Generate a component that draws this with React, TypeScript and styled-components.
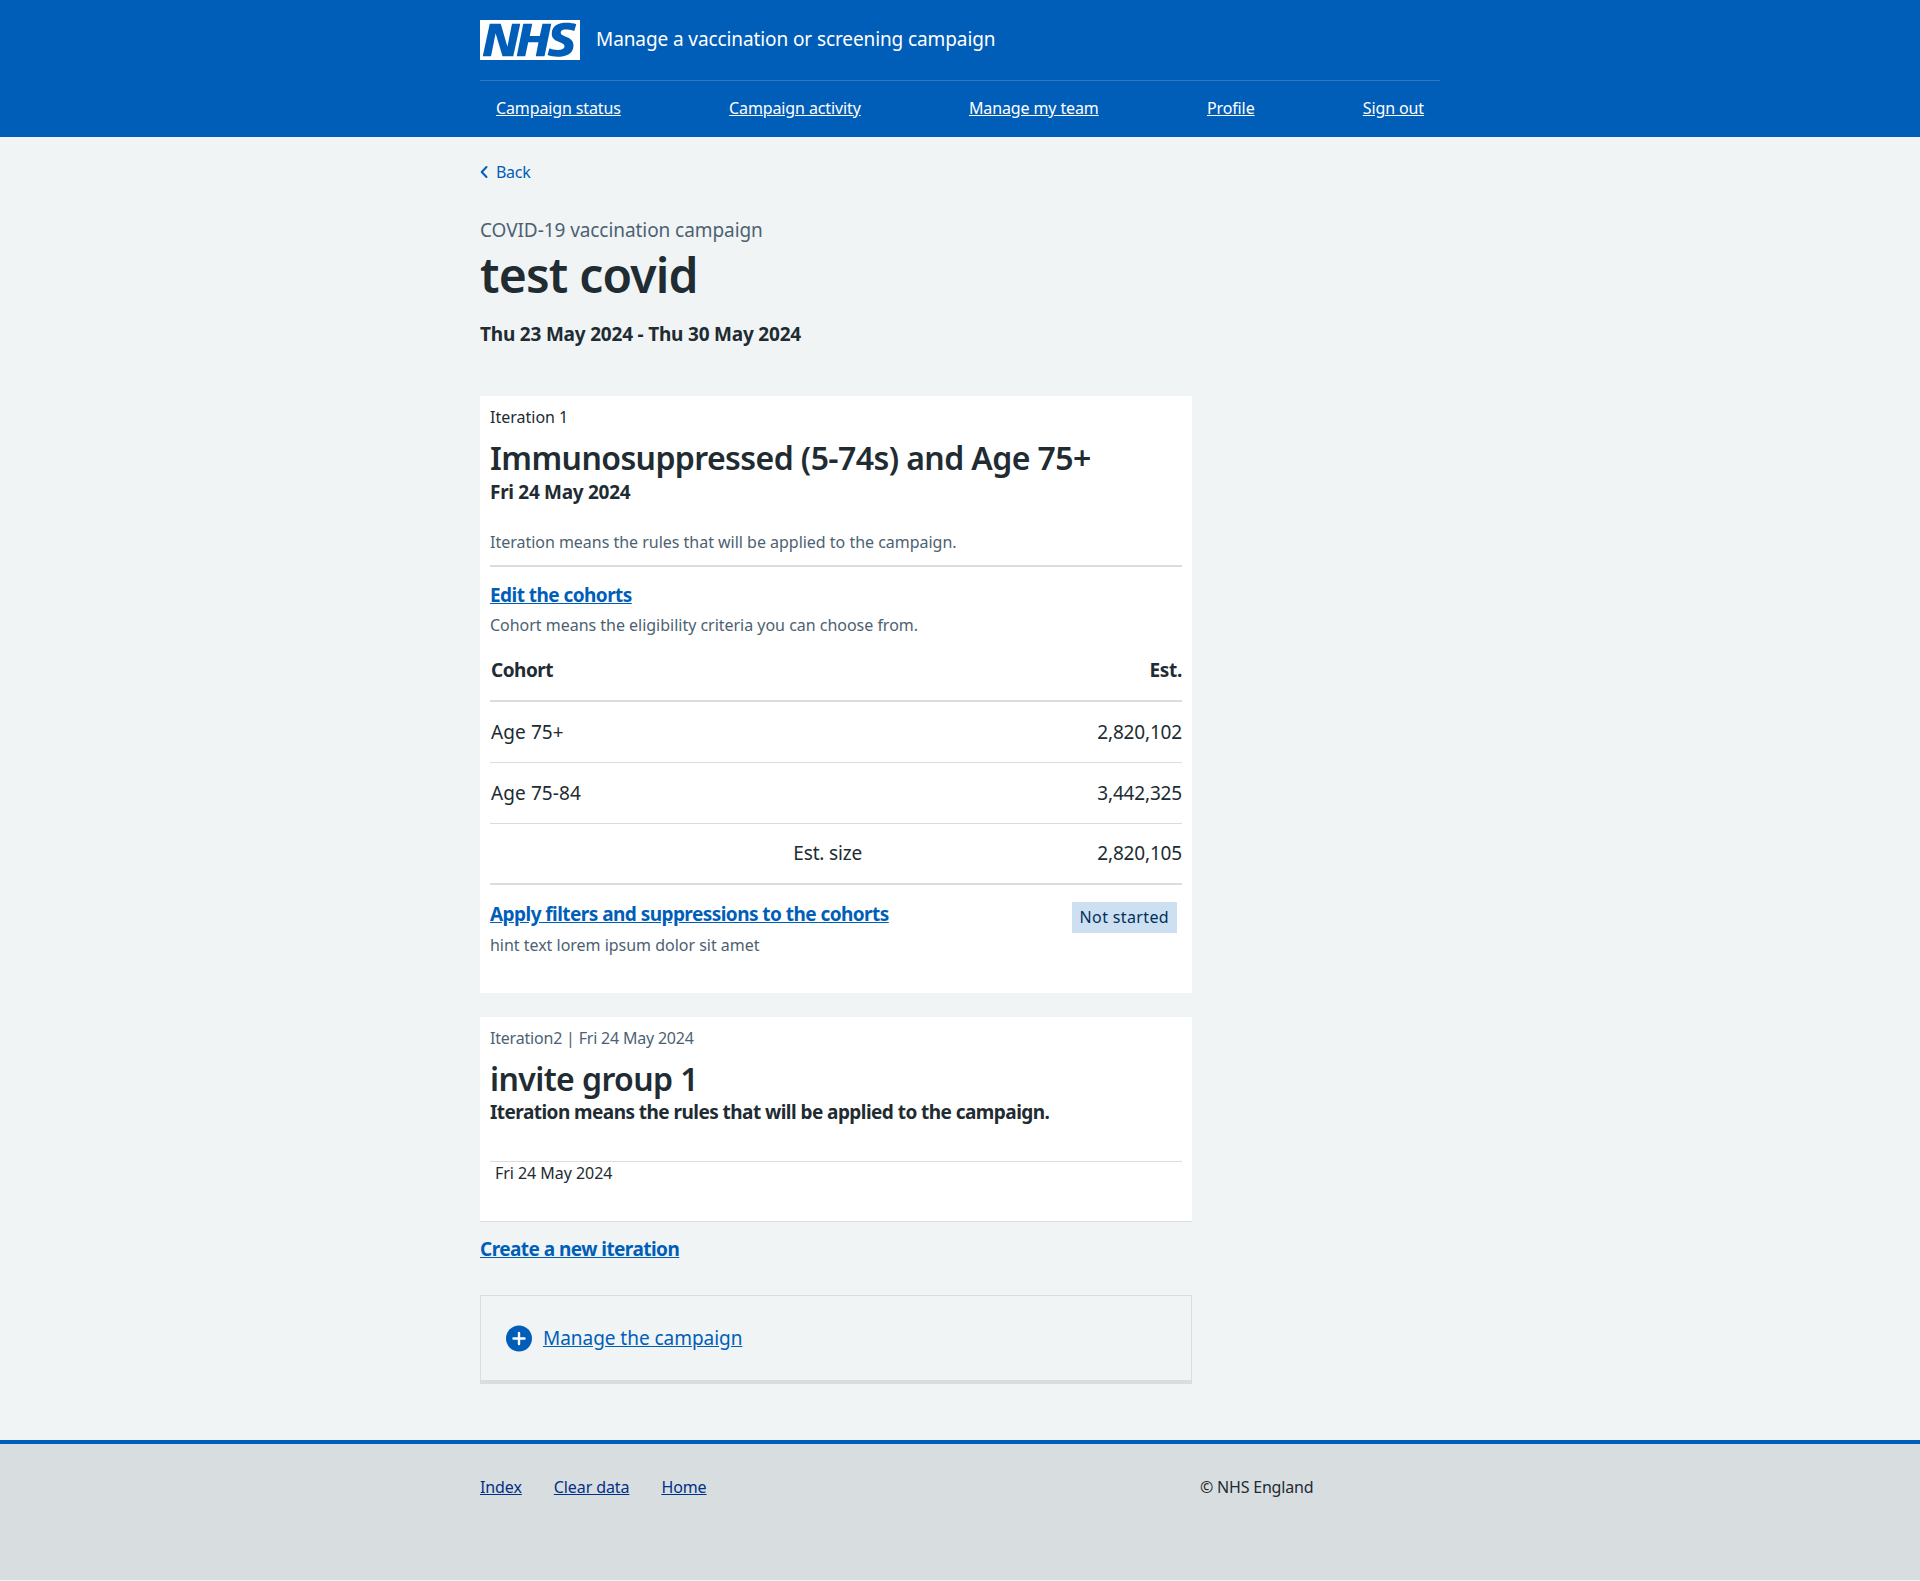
import styled, {createGlobalStyle} from 'styled-components';

const GlobalStyle = createGlobalStyle`
    * {
        box-sizing: border-box;
    }

    body {
        margin: 0;
        background: #f0f4f5;
        color: #212b32;
        font-family: "Noto Sans", "Open Sans", Arial, sans-serif;
        font-size: 16px;
        line-height: 24px;
    }
`

const navItems = ['Campaign status', 'Campaign activity', 'Manage my team', 'Profile', 'Sign out'];

const cohorts = [
    {name: 'Age 75+', est: '2,820,102'},
    {name: 'Age 75-84', est: '3,442,325'},
];

export default function App() {
    return (
        <>
            <GlobalStyle/>
            <Header>
                <Container>
                    <Brand>
                        <Logo viewBox="0 0 40 16" role="img" aria-label="NHS">
                            <path fill="#fff" d="M0 0h40v16H0z"/>
                            <path fill="#005eb8" d="M3.9 1.5h4.4l2.6 9h.1l1.8-9h3.3l-2.8 13H9l-2.7-9h-.1l-1.8 9H1.1M17.3 1.5h3.6l-1 4.9h4L25 1.5h3.5l-2.7 13h-3.5l1.1-5.6h-4.1l-1.2 5.6h-3.4M37.7 4.4c-.7-.3-1.6-.6-2.9-.6-1.4 0-2.5.2-2.5 1.3 0 1.8 5.1 1.2 5.1 5.1 0 3.6-3.3 4.5-6.4 4.5-1.3 0-2.9-.3-4-.7l.8-2.7c.7.4 2.1.7 3.2.7s2.8-.2 2.8-1.5c0-2.1-5.1-1.3-5.1-5 0-3.4 2.9-4.4 5.8-4.4 1.6 0 3.1.2 4 .6"/>
                        </Logo>
                        <ServiceName>Manage a vaccination or screening campaign</ServiceName>
                    </Brand>
                    <Nav>
                        {navItems.map(item => <NavLink href="#" key={item}>{item}</NavLink>)}
                    </Nav>
                </Container>
            </Header>
            <Container>
                <BackLink href="#">
                    <svg width="8" height="14" viewBox="0 0 8 14" aria-hidden="true">
                        <path d="M6.5 2 1.7 7l4.8 5" fill="none" stroke="#005eb8" strokeWidth="2" strokeLinecap="round" strokeLinejoin="round"/>
                    </svg>
                    Back
                </BackLink>
                <Content>
                    <Caption>COVID-19 vaccination campaign</Caption>
                    <PageTitle>test covid</PageTitle>
                    <Dates>Thu 23 May 2024 - Thu 30 May 2024</Dates>

                    <Card>
                        <SmallText>Iteration 1</SmallText>
                        <CardTitle>Immunosuppressed (5-74s) and Age 75+</CardTitle>
                        <CardDate>Fri 24 May 2024</CardDate>
                        <Hint $top={26}>Iteration means the rules that will be applied to the campaign.</Hint>
                        <Rule/>
                        <BoldLink href="#" $top={14}>Edit the cohorts</BoldLink>
                        <Hint $top={4}>Cohort means the eligibility criteria you can choose from.</Hint>
                        <CohortTable>
                            <thead>
                                <tr>
                                    <HeadCell>Cohort</HeadCell>
                                    <EstHeadCell $right>Est.</EstHeadCell>
                                </tr>
                            </thead>
                            <tbody>
                                {cohorts.map(c => (
                                    <tr key={c.name}>
                                        <NameCell>{c.name}</NameCell>
                                        <Cell $right>{c.est}</Cell>
                                    </tr>
                                ))}
                                <tr>
                                    <TotalCell>Est. size</TotalCell>
                                    <Cell $right>2,820,105</Cell>
                                </tr>
                            </tbody>
                        </CohortTable>
                        <TaskRow>
                            <div>
                                <BoldLink href="#">Apply filters and suppressions to the cohorts</BoldLink>
                                <Hint $top={5}>hint text lorem ipsum dolor sit amet</Hint>
                            </div>
                            <Tag>Not started</Tag>
                        </TaskRow>
                    </Card>

                    <SecondCard>
                        <SmallText $muted>Iteration2 | Fri 24 May 2024</SmallText>
                        <CardTitle>invite group 1</CardTitle>
                        <SubTitle>Iteration means the rules that will be applied to the campaign.</SubTitle>
                        <ThinRule/>
                        <DateLine>Fri 24 May 2024</DateLine>
                    </SecondCard>

                    <CreateLink href="#">Create a new iteration</CreateLink>

                    <Expander>
                        <svg width="26" height="27" viewBox="0 0 26 27" aria-hidden="true">
                            <circle cx="13" cy="13.5" r="13" fill="#005eb8"/>
                            <path d="M13 8v11M7.5 13.5h11" stroke="#fff" strokeWidth="2.4" strokeLinecap="round"/>
                        </svg>
                        <ExpanderLink href="#">Manage the campaign</ExpanderLink>
                    </Expander>
                </Content>
            </Container>
            <Footer>
                <FooterInner>
                    <FooterLinks>
                        <FooterLink href="#">Index</FooterLink>
                        <FooterLink href="#">Clear data</FooterLink>
                        <FooterLink href="#">Home</FooterLink>
                    </FooterLinks>
                    <Copyright>© NHS England</Copyright>
                </FooterInner>
            </Footer>
        </>
    );
}

const Container = styled.div`
    width: 960px;
    margin: 0 auto;
`

const Header = styled.header`
    background: #005eb8;
    height: 137px;
    padding-top: 20px;
`

const Brand = styled.div`
    display: flex;
    align-items: center;
    gap: 16px;
    height: 61px;
    padding-bottom: 20px;
    border-bottom: 1px solid #2c78c4;
`

const Logo = styled.svg`
    width: 100px;
    height: 40px;
    display: block;
`

const ServiceName = styled.span`
    color: #fff;
    font-size: 19px;
    line-height: 28px;
    letter-spacing: -0.1px;
    padding-bottom: 2px;
`

const Nav = styled.nav`
    display: flex;
    justify-content: space-between;
    padding: 15px 16px 0;
`

const NavLink = styled.a`
    color: #fff;
    font-size: 16px;
    letter-spacing: -0.12px;
`

const BackLink = styled.a`
    display: inline-flex;
    align-items: center;
    gap: 8px;
    margin-top: 23px;
    color: #005eb8;
    text-decoration: none;
    font-size: 16px;
    letter-spacing: -0.3px;
`

const Content = styled.main`
    width: 712px;
    padding-top: 31px;
`

const Caption = styled.div`
    color: #4c6272;
    font-size: 19px;
    line-height: 28px;
    letter-spacing: -0.07px;
`

const PageTitle = styled.h1`
    margin: 1px 0 0;
    font-size: 48px;
    line-height: 60px;
    font-weight: 600;
    letter-spacing: -0.8px;
`

const Dates = styled.p`
    margin: 15px 0 0;
    font-size: 19px;
    line-height: 28px;
    font-weight: 700;
    letter-spacing: -0.2px;
`

const Card = styled.section`
    background: #fff;
    margin-top: 48px;
    padding: 9px 10px 0;
    height: 597px;
`

const SecondCard = styled(Card)`
    margin-top: 24px;
    height: 205px;
    border-bottom: 1px solid #d8dde0;
`

const SmallText = styled.div<{$muted?: boolean}>`
    font-size: 16px;
    letter-spacing: ${props => props.$muted ? '-0.2px' : '0'};
    color: ${props => props.$muted ? '#4c6272' : '#212b32'};
`

const CardTitle = styled.h2`
    margin: 9px 0 0;
    font-size: 32px;
    line-height: 40px;
    font-weight: 600;
    letter-spacing: -0.58px;
`

const CardDate = styled.div`
    margin-top: 2px;
    font-size: 19px;
    line-height: 24px;
    font-weight: 700;
    letter-spacing: -0.3px;
`

const Hint = styled.p<{$top?: number}>`
    margin: ${props => props.$top ?? 0}px 0 0;
    color: #4c6272;
    font-size: 16px;
    letter-spacing: -0.02px;
`

const Rule = styled.hr`
    border: 0;
    height: 2px;
    background: #d8dde0;
    margin: 11px 0 0;
`

const ThinRule = styled(Rule)`
    height: 1px;
    margin-top: 37px;
`

const BoldLink = styled.a<{$top?: number}>`
    display: inline-block;
    margin-top: ${props => props.$top ?? 0}px;
    color: #005eb8;
    font-size: 19px;
    line-height: 28px;
    font-weight: 700;
    letter-spacing: -0.55px;
`

const CohortTable = styled.table`
    width: 100%;
    table-layout: fixed;
    border-collapse: collapse;
    margin-top: 5px;
    border-bottom: 2px solid #d8dde0;
`

const HeadCell = styled.th<{$right?: boolean}>`
    height: 59px;
    padding: 0 0 3px 1px;
    font-size: 19px;
    font-weight: 700;
    letter-spacing: ${props => props.$right ? '-0.3px' : '-0.5px'};
    text-align: ${props => props.$right ? 'right' : 'left'};
    border-bottom: 2px solid #d8dde0;
`

const EstHeadCell = styled(HeadCell)`
    width: 120px;
`

const Cell = styled.td<{$right?: boolean}>`
    height: 61px;
    padding: 0 0 0 1px;
    font-size: 19px;
    letter-spacing: -0.17px;
    text-align: ${props => props.$right ? 'right' : 'left'};
    border-bottom: 1px solid #d8dde0;
`

const NameCell = styled(Cell)`
    letter-spacing: 0.1px;
`

const TotalCell = styled(Cell)`
    text-align: right;
    padding-right: 200px;
`

const TaskRow = styled.div`
    display: flex;
    justify-content: space-between;
    align-items: flex-start;
    margin-top: 15px;
    padding-right: 5px;
`

const Tag = styled.strong`
    margin-top: 2px;
    padding: 3px 8px;
    height: 31px;
    background: #cce0f1;
    color: #002f5c;
    font-size: 16px;
    font-weight: 400;
    letter-spacing: 0.36px;
`

const SubTitle = styled.div`
    margin-top: 1px;
    font-size: 19px;
    line-height: 24px;
    font-weight: 700;
    letter-spacing: -0.55px;
`

const DateLine = styled.div`
    padding-left: 5px;
    font-size: 16px;
    line-height: 22px;
    letter-spacing: -0.05px;
`

const CreateLink = styled(BoldLink)`
    margin-top: 13px;
`

const Expander = styled.div`
    display: flex;
    align-items: center;
    gap: 11px;
    margin-top: 32px;
    height: 89px;
    padding-left: 25px;
    border: 1px solid #d8dde0;
    border-bottom-width: 4px;
`

const ExpanderLink = styled.a`
    color: #005eb8;
    font-size: 19px;
    letter-spacing: -0.04px;
`

const Footer = styled.footer`
    margin-top: 56px;
    height: 140px;
    background: #d8dde0;
    border-top: 4px solid #005eb8;
`

const FooterInner = styled(Container)`
    display: flex;
    padding-top: 31px;
`

const FooterLinks = styled.div`
    display: flex;
    gap: 32px;
    width: 720px;
`

const FooterLink = styled.a`
    color: #003087;
    font-size: 16px;
    letter-spacing: -0.1px;
`

const Copyright = styled.div`
    font-size: 16px;
    letter-spacing: -0.2px;
`
